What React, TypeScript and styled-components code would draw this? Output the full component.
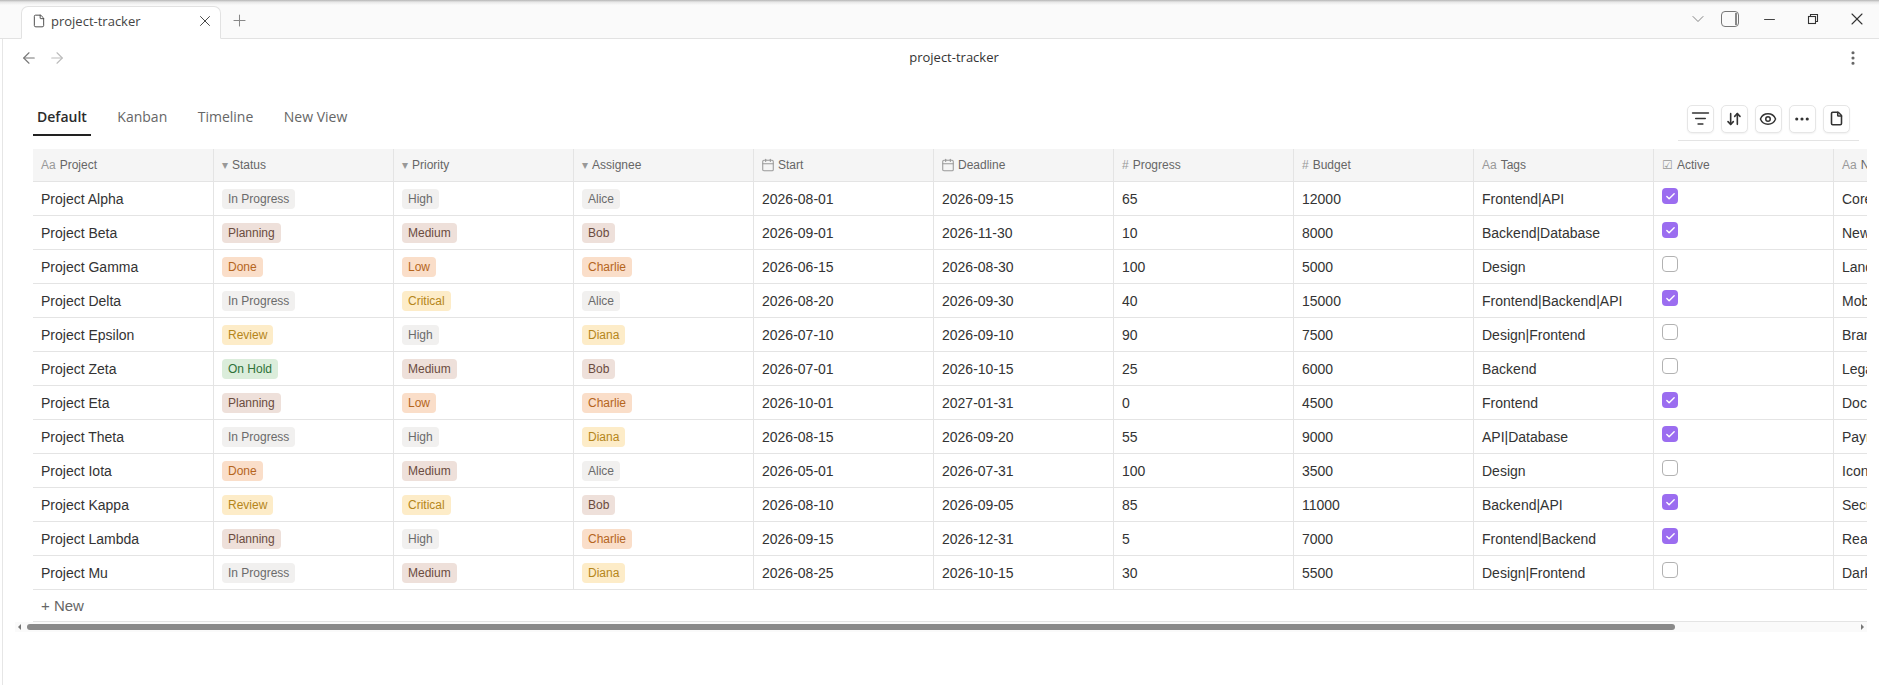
import styled, { createGlobalStyle } from 'styled-components';
import {
  ArrowDownUp,
  ArrowLeft,
  ArrowRight,
  Calendar,
  Check,
  ChevronDown,
  Ellipsis,
  EllipsisVertical,
  Eye,
  File,
  ListFilter,
  Minus,
  Plus,
  X,
} from 'lucide-react';

const GlobalStyle = createGlobalStyle`
  html, body {
    margin: 0;
    height: 100%;
    background: #fff;
    overflow: hidden;
  }
  #root {
    height: 100%;
  }
`;

const Window = styled.div`
  height: 100vh;
  display: flex;
  flex-direction: column;
  font-family: 'Liberation Sans', Arial, sans-serif;
  color: #333;
`;

const TabStrip = styled.div`
  height: 38px;
  flex: none;
  display: flex;
  align-items: flex-end;
  padding-left: 21px;
  background: linear-gradient(#b4b4b4, #e6e6e6 2px, #fafafa 5px);
  border-bottom: 1px solid #e2e2e2;
`;

const DocTab = styled.div`
  width: 200px;
  height: 33px;
  margin-bottom: -1px;
  box-sizing: border-box;
  display: flex;
  align-items: center;
  padding: 0 6px 3px 10px;
  gap: 5px;
  background: #fff;
  border: 1px solid #e2e2e2;
  border-bottom-color: #fff;
  border-radius: 7px 7px 0 0;
  font: 13px 'Open Sans', sans-serif;
  color: #444;
`;

const DocTabName = styled.span`
  flex: 1;
`;

const NewTab = styled.div`
  display: flex;
  align-items: center;
  height: 36px;
  margin-left: 9px;
  color: #888;
`;

const WindowControls = styled.div`
  margin-left: auto;
  height: 38px;
  display: flex;
  align-items: center;
  color: #333;
`;

const WindowButton = styled.div<{ $width: number }>`
  width: ${(p) => p.$width}px;
  display: flex;
  justify-content: center;
`;

const PanelIcon = styled.div`
  width: 18px;
  height: 16px;
  box-sizing: border-box;
  border: 1.5px solid #777;
  border-radius: 4px;
  display: flex;
  justify-content: flex-end;
  padding: 1px 1.5px 1px 0;
`;

const PanelIconBar = styled.div`
  width: 1.5px;
  background: #888;
`;

const RestoreIcon = () => (
  <svg width="12" height="12" viewBox="0 0 12 12" fill="none" stroke="#333" strokeWidth="1.1">
    <rect x="1.5" y="3.5" width="7" height="7" />
    <path d="M3.5 3.5V1.5h7v7h-2" />
  </svg>
);

const Panel = styled.div`
  flex: 1;
  min-height: 0;
  margin-left: 2px;
  border-left: 1px solid #e6e6e6;
  display: flex;
  flex-direction: column;
`;

const NavBar = styled.div`
  height: 38px;
  flex: none;
  display: grid;
  grid-template-columns: 1fr auto 1fr;
  align-items: center;
  padding: 0 17px;
`;

const NavArrows = styled.div`
  display: flex;
  gap: 10px;
`;

const NavEnd = styled.div`
  display: flex;
  justify-content: flex-end;
  color: #666;
`;

const PageTitle = styled.div`
  font: 13px 'Open Sans', sans-serif;
  color: #333;
  padding: 0 0 2px 26px;
`;

const ViewBar = styled.div`
  flex: none;
  height: 44px;
  margin-top: 28px;
  padding: 0 20px 0 30px;
  display: flex;
  justify-content: space-between;
`;

const ViewTabs = styled.div`
  display: flex;
  gap: 22.5px;
`;

const ViewTab = styled.div<{ $active?: boolean }>`
  height: 29px;
  padding: 0 4px;
  font: ${(p) => (p.$active ? 600 : 400)} 14px/24px 'Open Sans', sans-serif;
  color: ${(p) => (p.$active ? '#2b2b2b' : '#666')};
  border-bottom: 2px solid ${(p) => (p.$active ? '#222' : 'transparent')};
`;

const Actions = styled.div`
  height: 36px;
  box-sizing: border-box;
  padding: 0 9px;
  display: flex;
  gap: 6.5px;
  border-bottom: 1px solid #e4e4e4;
`;

const ActionButton = styled.div`
  width: 27.5px;
  height: 27.5px;
  box-sizing: border-box;
  display: flex;
  align-items: center;
  justify-content: center;
  background: #fff;
  border: 1px solid #e6e6e6;
  border-radius: 5px;
  box-shadow: 0 1px 2px rgba(0, 0, 0, 0.06);
  color: #333;
`;

const TableClip = styled.div`
  margin-left: 30px;
  width: 1834px;
  overflow: hidden;
  flex: none;
`;

const Table = styled.table`
  width: 1981px;
  table-layout: fixed;
  border-collapse: separate;
  border-spacing: 0;
  font-size: 14px;
`;

const HeadCell = styled.th`
  height: 33px;
  padding: 0 8px;
  box-sizing: border-box;
  background: #f5f5f5;
  border-right: 1px solid #e4e4e4;
  border-bottom: 1px solid #e4e4e4;
  font-size: 12px;
  font-weight: 400;
  text-align: left;
  color: #666;
`;

const HeadInner = styled.span`
  display: flex;
  align-items: center;
  gap: 4px;
`;

const HeadGlyph = styled.span`
  color: #999;
  font-size: 12px;
  display: flex;

  svg {
    margin: 0 -1px;
  }
`;

const Cell = styled.td`
  height: 34px;
  padding: 0 8px;
  box-sizing: border-box;
  border-right: 1px solid #e4e4e4;
  border-bottom: 1px solid #e4e4e4;
  white-space: nowrap;
  overflow: hidden;
  color: #333;
`;

const tagColors = {
  gray: { bg: '#f1f0ef', fg: '#6b6b6b' },
  brown: { bg: '#eee0da', fg: '#6b4c3f' },
  orange: { bg: '#fadec9', fg: '#b5651d' },
  yellow: { bg: '#fdecc8', fg: '#b5861a' },
  green: { bg: '#dbeddb', fg: '#2e7238' },
};

type TagColor = keyof typeof tagColors;

const Tag = styled.span<{ $color: TagColor }>`
  display: inline-block;
  padding: 0 6px;
  height: 20px;
  line-height: 20px;
  border-radius: 4px;
  font-size: 12px;
  background: ${(p) => tagColors[p.$color].bg};
  color: ${(p) => tagColors[p.$color].fg};
`;

const CheckBox = styled.span<{ $on: boolean }>`
  display: flex;
  align-items: center;
  justify-content: center;
  width: 16px;
  height: 16px;
  box-sizing: border-box;
  margin-top: -5px;
  border-radius: 4px;
  color: #fff;
  background: ${(p) => (p.$on ? '#9b6df0' : '#fff')};
  border: ${(p) => (p.$on ? 'none' : '1px solid #b2b2b2')};
`;

const NewRow = styled.div`
  height: 32px;
  margin-left: 30px;
  width: 1834px;
  box-sizing: border-box;
  padding-left: 8px;
  display: flex;
  align-items: center;
  font-size: 15px;
  color: #666;
  border-bottom: 1px solid #e4e4e4;
  flex: none;
`;

const ScrollBar = styled.div`
  margin-left: 12px;
  width: 1852px;
  height: 10px;
  flex: none;
  display: flex;
  align-items: center;
  background: #fafafa;
`;

const ScrollArrow = styled.div<{ $side: 'left' | 'right' }>`
  width: 0;
  height: 0;
  border-top: 3px solid transparent;
  border-bottom: 3px solid transparent;
  ${(p) => (p.$side === 'left' ? 'border-right: 3px solid #777;' : 'border-left: 3px solid #777;')}
  margin: ${(p) => (p.$side === 'left' ? '0 6px 0 3px' : '0 3px 0 auto')};
`;

const ScrollThumb = styled.div`
  width: 1648px;
  height: 6px;
  background: #8a8a8a;
  border-radius: 3px;
`;

type Row = {
  name: string;
  status: [string, TagColor];
  priority: [string, TagColor];
  assignee: [string, TagColor];
  start: string;
  deadline: string;
  progress: number;
  budget: number;
  tags: string;
  active: boolean;
  notes: string;
};

const S = {
  progress: ['In Progress', 'gray'],
  planning: ['Planning', 'brown'],
  done: ['Done', 'orange'],
  review: ['Review', 'yellow'],
  hold: ['On Hold', 'green'],
} as Record<string, [string, TagColor]>;

const P = {
  high: ['High', 'gray'],
  medium: ['Medium', 'brown'],
  low: ['Low', 'orange'],
  critical: ['Critical', 'yellow'],
} as Record<string, [string, TagColor]>;

const A = {
  alice: ['Alice', 'gray'],
  bob: ['Bob', 'brown'],
  charlie: ['Charlie', 'orange'],
  diana: ['Diana', 'yellow'],
} as Record<string, [string, TagColor]>;

const rows: Row[] = [
  { name: 'Project Alpha', status: S.progress, priority: P.high, assignee: A.alice, start: '2026-08-01', deadline: '2026-09-15', progress: 65, budget: 12000, tags: 'Frontend|API', active: true, notes: 'Core platform' },
  { name: 'Project Beta', status: S.planning, priority: P.medium, assignee: A.bob, start: '2026-09-01', deadline: '2026-11-30', progress: 10, budget: 8000, tags: 'Backend|Database', active: true, notes: 'New services' },
  { name: 'Project Gamma', status: S.done, priority: P.low, assignee: A.charlie, start: '2026-06-15', deadline: '2026-08-30', progress: 100, budget: 5000, tags: 'Design', active: false, notes: 'Landing page' },
  { name: 'Project Delta', status: S.progress, priority: P.critical, assignee: A.alice, start: '2026-08-20', deadline: '2026-09-30', progress: 40, budget: 15000, tags: 'Frontend|Backend|API', active: true, notes: 'Mobile app' },
  { name: 'Project Epsilon', status: S.review, priority: P.high, assignee: A.diana, start: '2026-07-10', deadline: '2026-09-10', progress: 90, budget: 7500, tags: 'Design|Frontend', active: false, notes: 'Brand refresh' },
  { name: 'Project Zeta', status: S.hold, priority: P.medium, assignee: A.bob, start: '2026-07-01', deadline: '2026-10-15', progress: 25, budget: 6000, tags: 'Backend', active: false, notes: 'Legacy migration' },
  { name: 'Project Eta', status: S.planning, priority: P.low, assignee: A.charlie, start: '2026-10-01', deadline: '2027-01-31', progress: 0, budget: 4500, tags: 'Frontend', active: true, notes: 'Documentation' },
  { name: 'Project Theta', status: S.progress, priority: P.high, assignee: A.diana, start: '2026-08-15', deadline: '2026-09-20', progress: 55, budget: 9000, tags: 'API|Database', active: true, notes: 'Payments' },
  { name: 'Project Iota', status: S.done, priority: P.medium, assignee: A.alice, start: '2026-05-01', deadline: '2026-07-31', progress: 100, budget: 3500, tags: 'Design', active: false, notes: 'Icon set' },
  { name: 'Project Kappa', status: S.review, priority: P.critical, assignee: A.bob, start: '2026-08-10', deadline: '2026-09-05', progress: 85, budget: 11000, tags: 'Backend|API', active: true, notes: 'Security audit' },
  { name: 'Project Lambda', status: S.planning, priority: P.high, assignee: A.charlie, start: '2026-09-15', deadline: '2026-12-31', progress: 5, budget: 7000, tags: 'Frontend|Backend', active: true, notes: 'Realtime sync' },
  { name: 'Project Mu', status: S.progress, priority: P.medium, assignee: A.diana, start: '2026-08-25', deadline: '2026-10-15', progress: 30, budget: 5500, tags: 'Design|Frontend', active: false, notes: 'Dark mode' },
];

const CalendarGlyph = () => <Calendar size={14} strokeWidth={1.8} />;

const columns: { title: string; glyph: React.ReactNode; width: number }[] = [
  { title: 'Project', glyph: 'Aa', width: 181 },
  { title: 'Status', glyph: '▾', width: 180 },
  { title: 'Priority', glyph: '▾', width: 180 },
  { title: 'Assignee', glyph: '▾', width: 180 },
  { title: 'Start', glyph: <CalendarGlyph />, width: 180 },
  { title: 'Deadline', glyph: <CalendarGlyph />, width: 180 },
  { title: 'Progress', glyph: '#', width: 180 },
  { title: 'Budget', glyph: '#', width: 180 },
  { title: 'Tags', glyph: 'Aa', width: 180 },
  { title: 'Active', glyph: '☑', width: 180 },
  { title: 'Notes', glyph: 'Aa', width: 180 },
];

export default function App() {
  return (
    <>
      <GlobalStyle />
      <Window>
        <TabStrip>
          <DocTab>
            <File size={14} strokeWidth={1.6} />
            <DocTabName>project-tracker</DocTabName>
            <X size={18} strokeWidth={1.3} />
          </DocTab>
          <NewTab>
            <Plus size={19} strokeWidth={1.3} />
          </NewTab>
          <WindowControls>
            <WindowButton $width={30}>
              <ChevronDown size={20} strokeWidth={1.1} color="#777" />
            </WindowButton>
            <WindowButton $width={34}>
              <PanelIcon>
                <PanelIconBar />
              </PanelIcon>
            </WindowButton>
            <WindowButton $width={44}>
              <Minus size={17} strokeWidth={1.3} />
            </WindowButton>
            <WindowButton $width={44}>
              <RestoreIcon />
            </WindowButton>
            <WindowButton $width={44}>
              <X size={20} strokeWidth={1.3} />
            </WindowButton>
          </WindowControls>
        </TabStrip>
        <Panel>
          <NavBar>
            <NavArrows>
              <ArrowLeft size={18} strokeWidth={1.5} color="#777" />
              <ArrowRight size={18} strokeWidth={1.5} color="#bbb" />
            </NavArrows>
            <PageTitle>project-tracker</PageTitle>
            <NavEnd>
              <EllipsisVertical size={18} strokeWidth={2.2} />
            </NavEnd>
          </NavBar>
          <ViewBar>
            <ViewTabs>
              <ViewTab $active>Default</ViewTab>
              <ViewTab>Kanban</ViewTab>
              <ViewTab>Timeline</ViewTab>
              <ViewTab>New View</ViewTab>
            </ViewTabs>
            <Actions>
              <ActionButton>
                <ListFilter size={19} strokeWidth={2} />
              </ActionButton>
              <ActionButton>
                <ArrowDownUp size={16} strokeWidth={2.4} />
              </ActionButton>
              <ActionButton>
                <Eye size={18} strokeWidth={2} />
              </ActionButton>
              <ActionButton>
                <Ellipsis size={18} strokeWidth={2.2} />
              </ActionButton>
              <ActionButton>
                <File size={15} strokeWidth={2.5} />
              </ActionButton>
            </Actions>
          </ViewBar>
          <TableClip>
            <Table>
              <colgroup>
                {columns.map((c) => (
                  <col key={c.title} width={c.width} />
                ))}
              </colgroup>
              <thead>
                <tr>
                  {columns.map((c) => (
                    <HeadCell key={c.title}>
                      <HeadInner>
                        <HeadGlyph>{c.glyph}</HeadGlyph>
                        {c.title}
                      </HeadInner>
                    </HeadCell>
                  ))}
                </tr>
              </thead>
              <tbody>
                {rows.map((r) => (
                  <tr key={r.name}>
                    <Cell>{r.name}</Cell>
                    <Cell>
                      <Tag $color={r.status[1]}>{r.status[0]}</Tag>
                    </Cell>
                    <Cell>
                      <Tag $color={r.priority[1]}>{r.priority[0]}</Tag>
                    </Cell>
                    <Cell>
                      <Tag $color={r.assignee[1]}>{r.assignee[0]}</Tag>
                    </Cell>
                    <Cell>{r.start}</Cell>
                    <Cell>{r.deadline}</Cell>
                    <Cell>{r.progress}</Cell>
                    <Cell>{r.budget}</Cell>
                    <Cell>{r.tags}</Cell>
                    <Cell>
                      <CheckBox $on={r.active}>
                        {r.active && <Check size={11} strokeWidth={3} />}
                      </CheckBox>
                    </Cell>
                    <Cell>{r.notes}</Cell>
                  </tr>
                ))}
              </tbody>
            </Table>
          </TableClip>
          <NewRow>+ New</NewRow>
          <ScrollBar>
            <ScrollArrow $side="left" />
            <ScrollThumb />
            <ScrollArrow $side="right" />
          </ScrollBar>
        </Panel>
      </Window>
    </>
  );
}
